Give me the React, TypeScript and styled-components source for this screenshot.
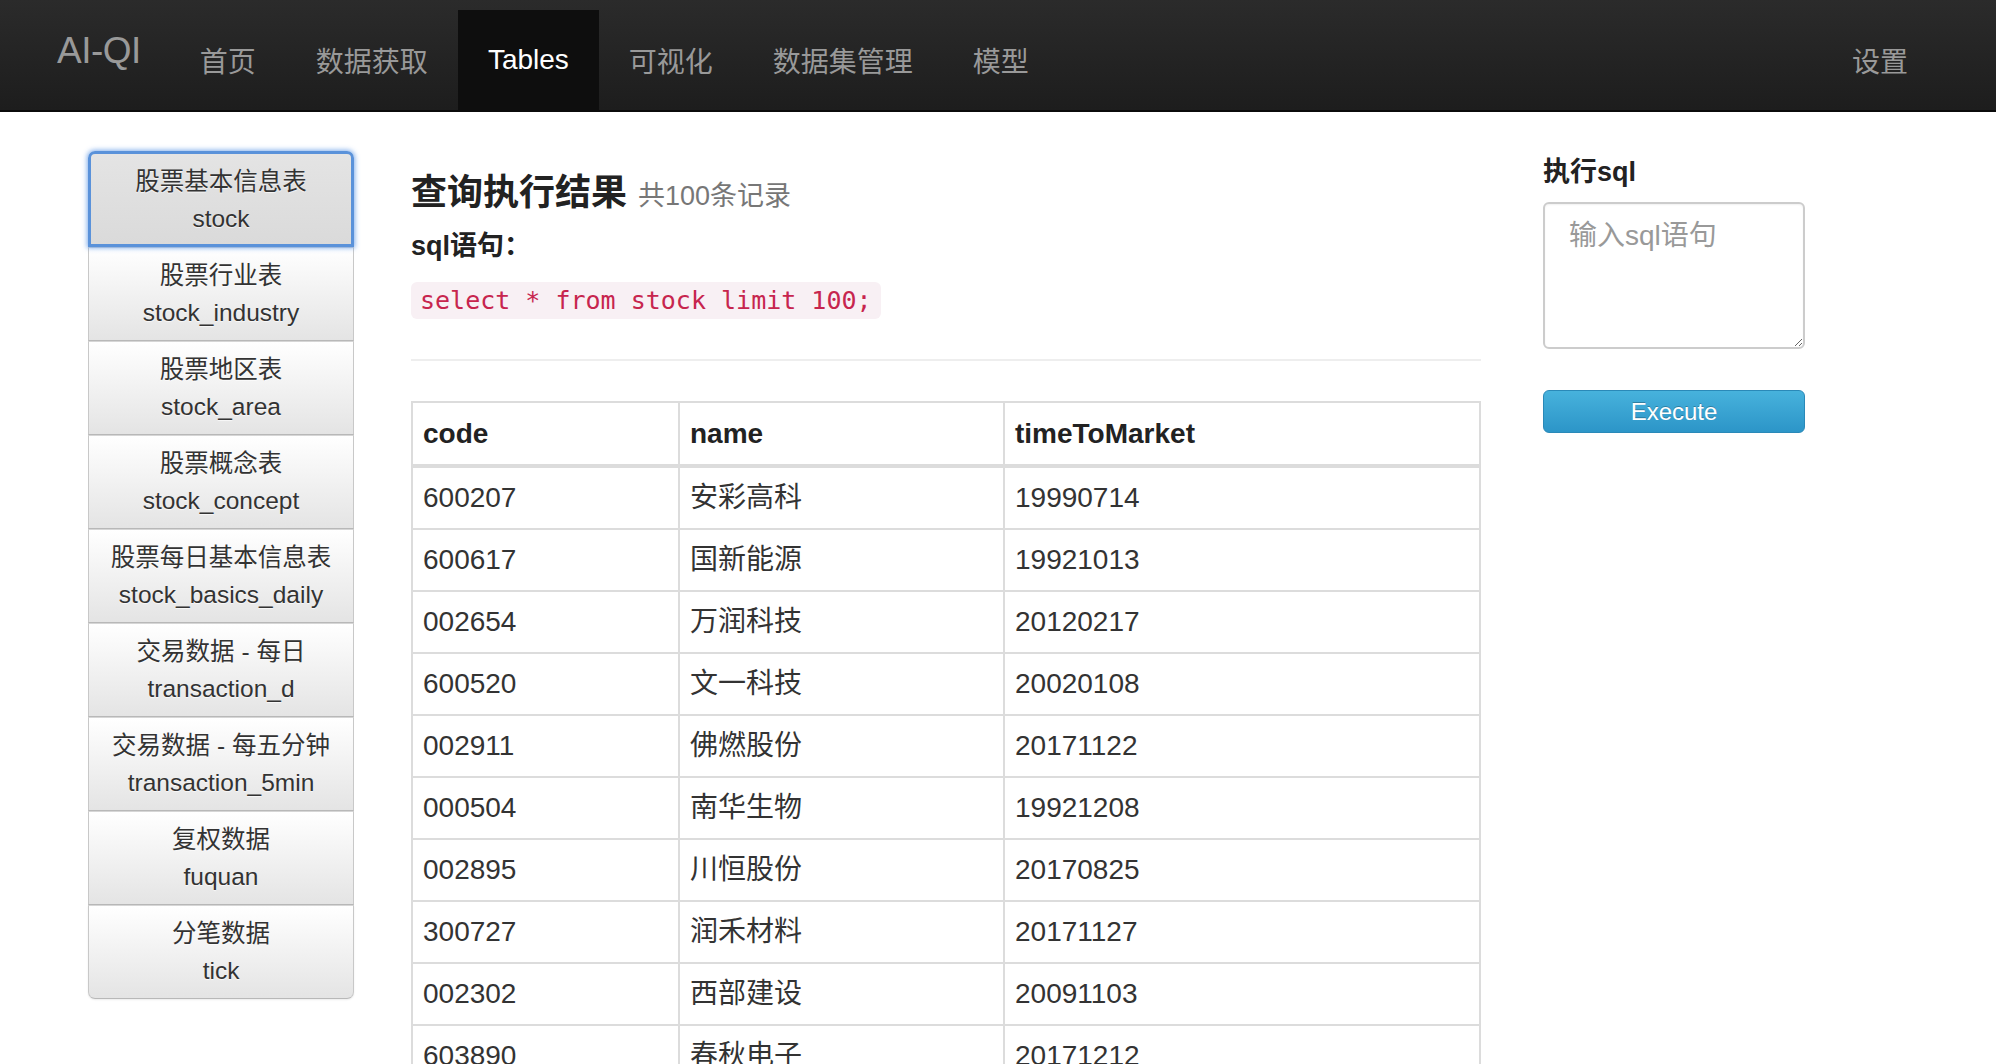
import styled, { createGlobalStyle } from "styled-components";

const GlobalStyle = createGlobalStyle`
  body {
    margin: 0;
    background: #fff;
    color: #333;
    font-family: "Liberation Sans", "Noto Sans CJK SC", sans-serif;
  }
`;

const NAV_ITEMS = ["首页", "数据获取", "Tables", "可视化", "数据集管理", "模型"];

const TABLES = [
  { title: "股票基本信息表", name: "stock" },
  { title: "股票行业表", name: "stock_industry" },
  { title: "股票地区表", name: "stock_area" },
  { title: "股票概念表", name: "stock_concept" },
  { title: "股票每日基本信息表", name: "stock_basics_daily" },
  { title: "交易数据 - 每日", name: "transaction_d" },
  { title: "交易数据 - 每五分钟", name: "transaction_5min" },
  { title: "复权数据", name: "fuquan" },
  { title: "分笔数据", name: "tick" },
];

const ROWS = [
  ["600207", "安彩高科", "19990714"],
  ["600617", "国新能源", "19921013"],
  ["002654", "万润科技", "20120217"],
  ["600520", "文一科技", "20020108"],
  ["002911", "佛燃股份", "20171122"],
  ["000504", "南华生物", "19921208"],
  ["002895", "川恒股份", "20170825"],
  ["300727", "润禾材料", "20171127"],
  ["002302", "西部建设", "20091103"],
  ["603890", "春秋电子", "20171212"],
];

const Navbar = styled.nav`
  height: 110px;
  display: flex;
  align-items: flex-end;
  padding: 0 58px 0 57px;
  background: linear-gradient(#2b2b2b, #1d1d1d);
  border-bottom: 2px solid #0b0b0b;
`;

const Brand = styled.a`
  align-self: center;
  margin: 0 29px 8px 0;
  font-size: 37px;
  color: #999;
  letter-spacing: -0.5px;
`;

const NavItem = styled.a<{ $active?: boolean }>`
  height: 100px;
  display: flex;
  align-items: center;
  padding: 0 30px;
  font-size: 28px;
  color: ${(p) => (p.$active ? "#fff" : "#999")};
  background: ${(p) => (p.$active ? "#0e0e0e" : "transparent")};
`;

const Spacer = styled.div`
  flex: 1;
`;

const Page = styled.div`
  display: flex;
  align-items: flex-start;
  padding: 39px 0 0 88px;
`;

const Sidebar = styled.div`
  width: 266px;
  display: flex;
  flex-direction: column;
`;

const TableButton = styled.button<{ $focused?: boolean; $first?: boolean; $last?: boolean }>`
  box-sizing: border-box;
  height: ${(p) => (p.$first ? "96px" : "94px")};
  padding: 9px 2px;
  font-family: inherit;
  font-size: 24.5px;
  line-height: 37px;
  color: #333;
  text-shadow: 0 1px 1px rgba(255, 255, 255, 0.75);
  background: linear-gradient(#ffffff, #e4e4e4);
  border: 1px solid #c8c8c8;
  border-top-color: #d6d6d6;
  border-bottom-color: #b8b8b8;
  border-radius: ${(p) => (p.$first ? "7px 7px 0 0" : p.$last ? "0 0 7px 7px" : "0")};
  box-shadow: ${(p) => (p.$last ? "0 1px 2px rgba(0,0,0,0.08)" : "none")};
  position: relative;
  cursor: pointer;

  ${(p) =>
    p.$focused &&
    `
    z-index: 1;
    background: linear-gradient(#e4e4e4, #dadada);
    border: 3px solid #5a92da;
    box-shadow: 0 0 5px 1px rgba(88, 148, 230, 0.75);
  `}
`;

const Line = styled.div`
  white-space: nowrap;
`;

const Main = styled.div`
  width: 1070px;
  margin-left: 57px;
`;

const Title = styled.h3`
  margin: 20px 0 0;
  font-size: 36px;
  line-height: 44px;
  font-weight: bold;
  color: #222;
`;

const Count = styled.small`
  margin-left: 11px;
  font-size: 27px;
  font-weight: normal;
  color: #777;
`;

const SqlLabel = styled.div`
  margin-top: 11px;
  font-size: 27px;
  line-height: 34px;
  font-weight: bold;
  color: #222;
`;

const CodeRow = styled.div`
  display: flex;
  margin-top: 19px;
`;

const Code = styled.code`
  padding: 0 9px;
  font-family: "DejaVu Sans Mono", "Liberation Mono", monospace;
  font-size: 25px;
  line-height: 37px;
  color: #c7254e;
  background: #f8f0f4;
  border-radius: 6px;
`;

const Divider = styled.hr`
  margin: 40px 0 0;
  border: 0;
  border-top: 2px solid #eeeeee;
`;

const ResultTable = styled.table`
  width: 100%;
  margin-top: 40px;
  border-collapse: collapse;
  border: 2px solid #dcdcdc;
  font-size: 28px;
`;

const Th = styled.th<{ $width?: string }>`
  width: ${(p) => p.$width ?? "auto"};
  padding: 13px 10px 12px;
  line-height: 36px;
  text-align: left;
  font-weight: bold;
  color: #222;
  border-left: 2px solid #dcdcdc;
  border-bottom: 4px solid #dcdcdc;
`;

const Td = styled.td`
  padding: 12px 10px;
  line-height: 36px;
  color: #333;
  border-left: 2px solid #dcdcdc;
  border-top: 2px solid #dcdcdc;
`;

const Aside = styled.div`
  width: 262px;
  margin-left: 62px;
  display: flex;
  flex-direction: column;
`;

const AsideLabel = styled.div`
  margin-top: 6px;
  font-size: 27px;
  line-height: 30px;
  font-weight: bold;
  color: #222;
`;

const SqlInput = styled.textarea`
  box-sizing: border-box;
  width: 262px;
  height: 147px;
  margin-top: 15px;
  padding: 14px 24px;
  font-family: inherit;
  font-size: 28px;
  line-height: 36px;
  color: #555;
  border: 2px solid #cccccc;
  border-radius: 6px;
  box-shadow: inset 0 1px 2px rgba(0, 0, 0, 0.06);
  outline: none;

  &::placeholder {
    color: #999;
  }
`;

const ExecuteButton = styled.button`
  box-sizing: border-box;
  height: 43px;
  margin-top: 41px;
  font-family: inherit;
  font-size: 24px;
  color: #fff;
  text-shadow: 0 -1px 0 rgba(0, 0, 0, 0.25);
  background: linear-gradient(#47b2dc, #2c95c8);
  border: 1px solid #2a89b8;
  border-radius: 6px;
  cursor: pointer;
`;

const App = () => {
  return (
    <>
      <GlobalStyle />
      <Navbar>
        <Brand>AI-QI</Brand>
        {NAV_ITEMS.map((item) => (
          <NavItem key={item} $active={item === "Tables"}>
            {item}
          </NavItem>
        ))}
        <Spacer />
        <NavItem>设置</NavItem>
      </Navbar>
      <Page>
        <Sidebar>
          {TABLES.map((t, i) => (
            <TableButton
              key={t.name}
              $first={i === 0}
              $last={i === TABLES.length - 1}
              $focused={i === 0}
            >
              <Line>{t.title}</Line>
              <Line>{t.name}</Line>
            </TableButton>
          ))}
        </Sidebar>
        <Main>
          <Title>
            查询执行结果<Count>共100条记录</Count>
          </Title>
          <SqlLabel>sql语句：</SqlLabel>
          <CodeRow>
            <Code>select * from stock limit 100;</Code>
          </CodeRow>
          <Divider />
          <ResultTable>
            <thead>
              <tr>
                <Th $width="245px">code</Th>
                <Th $width="303px">name</Th>
                <Th>timeToMarket</Th>
              </tr>
            </thead>
            <tbody>
              {ROWS.map((r) => (
                <tr key={r[0]}>
                  <Td>{r[0]}</Td>
                  <Td>{r[1]}</Td>
                  <Td>{r[2]}</Td>
                </tr>
              ))}
            </tbody>
          </ResultTable>
        </Main>
        <Aside>
          <AsideLabel>执行sql</AsideLabel>
          <SqlInput placeholder="输入sql语句" />
          <ExecuteButton>Execute</ExecuteButton>
        </Aside>
      </Page>
    </>
  );
};

export default App;
